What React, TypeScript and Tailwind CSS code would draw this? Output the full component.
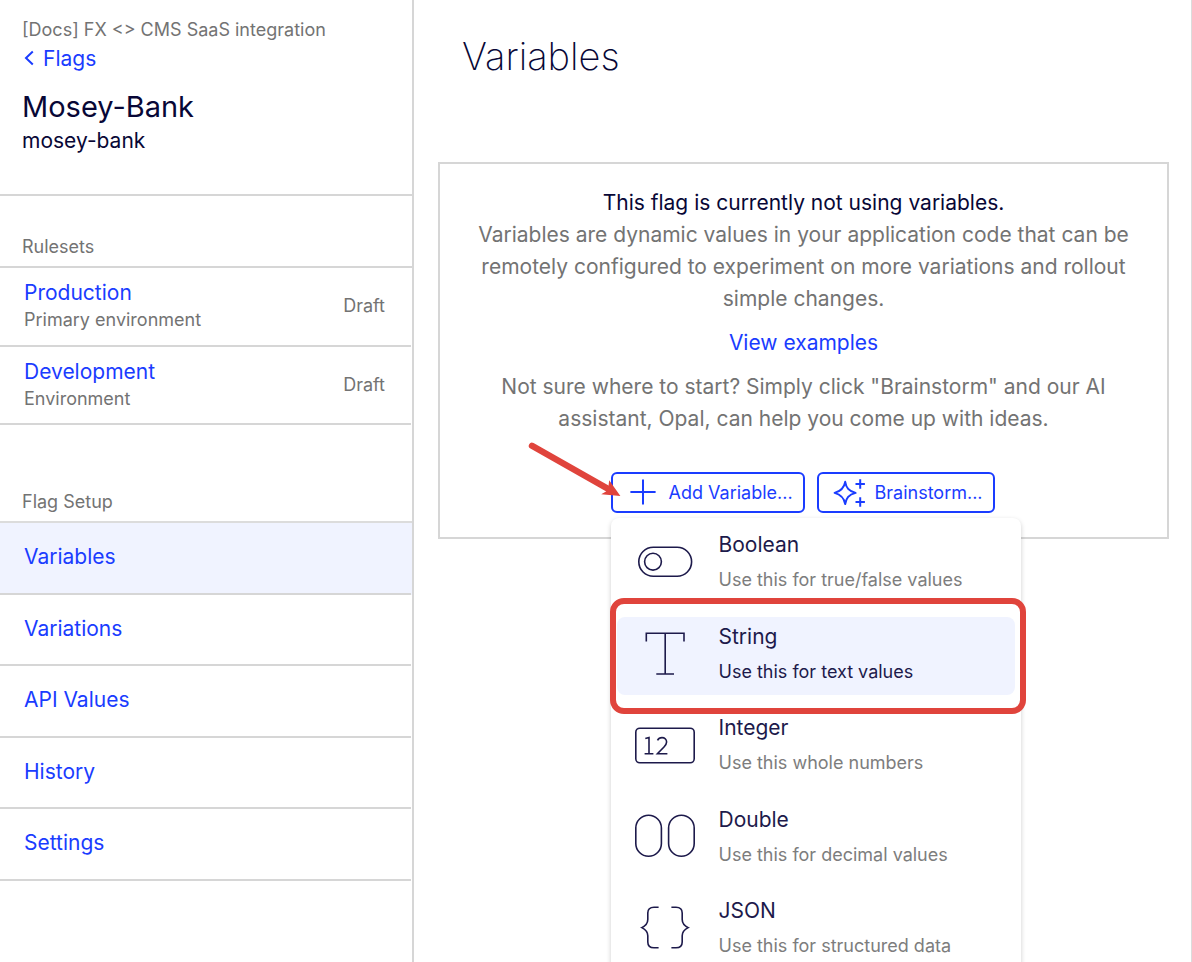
import type { ReactNode } from "react";

const environments = [
  { name: "Production", detail: "Primary environment", status: "Draft" },
  { name: "Development", detail: "Environment", status: "Draft" },
];

const setupLinks = ["Variables", "Variations", "API Values", "History", "Settings"];

function MenuIcon({ children }: { children: ReactNode }) {
  return (
    <svg
      viewBox="0 0 64 64"
      className="size-16 shrink-0"
      fill="none"
      stroke="#1d1a4b"
      strokeWidth="1.6"
      aria-hidden="true"
    >
      {children}
    </svg>
  );
}

const variableTypes = [
  {
    name: "Boolean",
    detail: "Use this for true/false values",
    icon: (
      <MenuIcon>
        <rect x="5.8" y="15.2" width="52.8" height="29" rx="14.5" />
        <circle cx="20" cy="29.7" r="8.4" />
      </MenuIcon>
    ),
  },
  {
    name: "String",
    detail: "Use this for text values",
    icon: (
      <MenuIcon>
        <path d="M13.3 17.5V9.3H51V17.5M32.2 9.3V50M23.3 50H41" />
      </MenuIcon>
    ),
  },
  {
    name: "Integer",
    detail: "Use this whole numbers",
    icon: (
      <MenuIcon>
        <rect x="2.8" y="13.2" width="58.4" height="34.6" rx="4" />
        <path d="M12.3 23.6L16 22.6V38.3M11.6 38.8H20.4M24.5 25.4C25.6 23.2 27.3 22.6 29 22.6C31.6 22.6 33.6 24.4 33.6 27C33.6 29 32.6 30.3 31 32L24.4 38.8H34.4" />
      </MenuIcon>
    ),
  },
  {
    name: "Double",
    detail: "Use this for decimal values",
    icon: (
      <MenuIcon>
        <rect x="2.8" y="8.2" width="25.6" height="41" rx="12.8" />
        <rect x="35.6" y="8.2" width="25.6" height="41" rx="12.8" />
      </MenuIcon>
    ),
  },
  {
    name: "JSON",
    detail: "Use this for structured data",
    icon: (
      <MenuIcon>
        <path d="M25.6 9.2H21C17 9.2 14.8 11.4 14.8 15V21.5C14.8 25.5 12 28 8.8 29.6C12 31.2 14.8 33.8 14.8 37.8V44C14.8 47.8 17 49.8 21 49.8H25.6" />
        <path d="M38.4 9.2H43C47 9.2 49.2 11.4 49.2 15V21.5C49.2 25.5 52 28 55.2 29.6C52 31.2 49.2 33.8 49.2 37.8V44C49.2 47.8 47 49.8 43 49.8H38.4" />
      </MenuIcon>
    ),
  },
];

function Sidebar() {
  return (
    <aside className="w-[414px] shrink-0 border-r-2 border-[#d6d6d6]">
      <header className="h-[196px] border-b-2 border-[#d6d6d6] px-[22px] pt-4">
        <p className="text-lg leading-7 text-[#737373]">[Docs] FX &lt;&gt; CMS SaaS integration</p>
        <a href="#flags" className="flex items-center gap-2 text-[21px] leading-[30px] text-[#1a3cff]">
          <svg viewBox="0 0 13 18" className="h-[18px] w-[13px]" fill="none" stroke="currentColor" strokeWidth="2" aria-hidden="true">
            <path d="M10.8 1.6L4 8L10.8 14.4" />
          </svg>
          Flags
        </a>
        <h1 className="mt-3 text-[29px] leading-[42px]">Mosey-Bank</h1>
        <p className="text-[21px] leading-[26px]">mosey-bank</p>
      </header>

      <section>
        <h2 className="flex h-[72px] items-end border-b-2 border-[#d6d6d6] px-[22px] pb-[5px] text-lg text-[#737373]">
          Rulesets
        </h2>
        <ul className="grid h-[157px] auto-rows-fr">
          {environments.map((env) => (
            <li
              key={env.name}
              className="mr-px flex items-center justify-between border-b-2 border-[#d6d6d6] pr-[26px] pl-6"
            >
              <div>
                <a href="#ruleset" className="block text-[21px] leading-7 text-[#1a3cff]">
                  {env.name}
                </a>
                <p className="text-lg leading-[26px] text-[#737373]">{env.detail}</p>
              </div>
              <span className="text-lg text-[#737373]">{env.status}</span>
            </li>
          ))}
        </ul>
      </section>

      <nav aria-labelledby="flag-setup">
        <h2
          id="flag-setup"
          className="flex h-[98px] items-end border-b-2 border-[#dcdcdc] px-[22px] pb-[5px] text-lg text-[#737373]"
        >
          Flag Setup
        </h2>
        <ul className="grid h-[358px] auto-rows-fr">
          {setupLinks.map((label) => (
            <li key={label} className={label === "Variables" ? "bg-[#f0f3ff]" : ""}>
              <a
                href="#setup"
                className="mr-px flex h-full items-center border-b-2 border-[#d6d6d6] pb-0.5 pl-6 text-[21px] text-[#1a3cff]"
              >
                {label}
              </a>
            </li>
          ))}
        </ul>
      </nav>
    </aside>
  );
}

function VariableMenu() {
  return (
    <div
      role="menu"
      className="absolute top-[46px] left-0 flex h-[458px] w-[410px] flex-col justify-between rounded-lg bg-white px-1.5 py-[7px] text-left shadow-[0_2px_5px_rgba(0,0,0,0.2)]"
    >
      {variableTypes.map((type) => {
        const active = type.name === "String";
        return (
          <div key={type.name} className="relative">
            <button
              type="button"
              role="menuitem"
              className={
                active
                  ? "flex h-[78px] w-full items-center gap-[22px] rounded-lg bg-[#f0f3ff] px-4"
                  : "flex h-[78px] w-full items-center gap-[22px] rounded-lg px-4"
              }
            >
              {type.icon}
              <span className="pb-1 text-left">
                <span className="block text-[21px] leading-9 text-[#1d1a4b]">{type.name}</span>
                <span
                  className={
                    active
                      ? "block text-lg leading-[34px] text-[#1d1a4b]"
                      : "block text-lg leading-[34px] text-[#7d7d7d]"
                  }
                >
                  {type.detail}
                </span>
              </span>
            </button>
            {active && (
              <span className="pointer-events-none absolute -top-[19px] -right-[11px] -bottom-[19px] -left-[7px] z-10 rounded-[14px] border-6 border-[#e0443c]" />
            )}
          </div>
        );
      })}
    </div>
  );
}

const buttonClass =
  "flex h-[41px] items-center rounded-md border-2 border-[#1a3cff] bg-white text-lg font-normal text-[#1a3cff]";

export default function App() {
  return (
    <div className="flex h-screen overflow-hidden border-r border-[#dcdcdc] bg-white font-['Inter',sans-serif] text-[#080736]">
      <Sidebar />
      <main className="min-w-0 flex-1 pt-8 pr-[22px] pl-6">
        <h2 className="px-6 text-[38px] leading-[48px] font-extralight">Variables</h2>
        <section className="mt-[82px] h-[377px] border-2 border-[#d6d6d6] px-6 pt-[23px] text-center text-[21px] leading-8 text-[#737373]">
          <p className="text-[#080736]">This flag is currently not using variables.</p>
          <p>
            Variables are dynamic values in your application code that can be remotely configured to experiment on
            more variations and rollout simple changes.
          </p>
          <p className="my-3">
            <a href="#examples" className="text-[#1a3cff]">
              View examples
            </a>
          </p>
          <p>
            Not sure where to start? Simply click "Brainstorm" and our AI assistant, Opal, can help you come up with
            ideas.
          </p>
          <div className="mt-[37px] flex justify-center gap-3 pr-0.5">
            <div className="relative">
              <button type="button" aria-haspopup="menu" aria-expanded="true" className={`${buttonClass} w-[194px] gap-3 pl-4`}>
                <svg viewBox="0 0 28 28" className="size-7" fill="none" stroke="currentColor" strokeWidth="2" aria-hidden="true">
                  <path d="M14 .4V25.6M1.4 13H26.6" />
                </svg>
                Add Variable...
              </button>
              <VariableMenu />
              <svg
                viewBox="0 0 96 60"
                className="pointer-events-none absolute -top-8 -left-[84px] h-[60px] w-24"
                fill="#e0443c"
                aria-hidden="true"
              >
                <path d="M5 5.8L80 48.2" stroke="#e0443c" strokeWidth="6.4" strokeLinecap="round" />
                <path d="M93.4 56L82.2 40.2L81.5 46L79 51.5L74.2 54.2Z" />
              </svg>
            </div>
            <button type="button" className={`${buttonClass} w-[178px] gap-2 pl-3.5`}>
              <svg viewBox="0 0 34 30" className="h-[30px] w-[34px]" fill="none" stroke="currentColor" strokeWidth="2" aria-hidden="true">
                <path
                  d="M12.2 3.8C13.2 9.8 15.6 13 22.6 14.9C15.6 16.8 13.2 20 12.2 26C11.2 20 8.2 16.8 1.6 14.9C8.2 13 11.2 9.8 12.2 3.8Z"
                  strokeLinejoin="round"
                />
                <path d="M27.2 1.3V10.7M22.5 6H31.9M27.2 19.3V28.7M22.5 24H31.9" />
              </svg>
              Brainstorm...
            </button>
          </div>
        </section>
      </main>
    </div>
  );
}
